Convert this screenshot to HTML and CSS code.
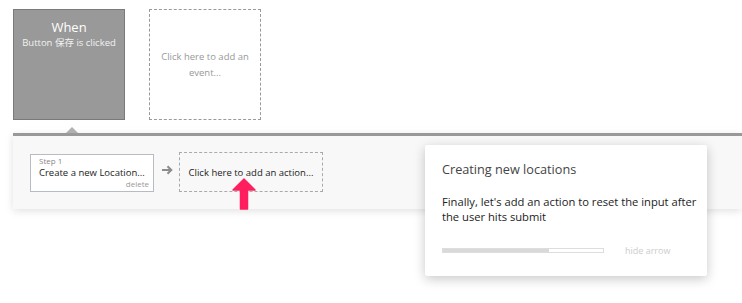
FILE: index.html
```html
<!DOCTYPE html>
<html lang="en">
<head>
  <meta charset="UTF-8" />
  <title>Workflow</title>
  <link rel="stylesheet" href="styles.css">
</head>
<body>

<div class="events">
  <div class="event-box when">
    <div class="when-title">When</div>
    <div class="when-sub">Button 保存 is clicked</div>
  </div>
  <div class="event-box add-event">Click here to add an event...</div>
</div>

<div class="panel">
  <div class="notch"></div>
  <div class="steps">
    <div class="step">
      <div class="step-label">Step 1</div>
      <div class="step-name">Create a new Location...</div>
      <div class="step-delete">delete</div>
    </div>
    <svg class="step-arrow" width="11" height="10" viewBox="0 0 11 10">
      <path d="M0 5 H9 M5.5 1.2 L9.3 5 L5.5 8.8" fill="none" stroke="#8c8c8c" stroke-width="2"/>
    </svg>
    <div class="add-action">Click here to add an action...</div>
  </div>
  <svg class="pink-arrow" width="24" height="32" viewBox="0 0 24 32">
    <path d="M12 1 L23 12 L15.5 12 L15.5 31 L8.5 31 L8.5 12 L1 12 Z" fill="#ff1f5e" stroke="#ff1f5e" stroke-width="1.5" stroke-linejoin="round"/>
  </svg>

  <div class="tip">
    <div class="tip-title">Creating new locations</div>
    <div class="tip-text">Finally, let's add an action to reset the input after the user hits submit</div>
    <div class="tip-foot">
      <div class="progress"><div class="progress-fill" style="width: 66%"></div></div>
      <div class="hide-arrow">hide arrow</div>
    </div>
  </div>
</div>

</body>
</html>
```

FILE: styles.css
```css
body {
  margin: 0;
  min-height: 303px;
  background: #fff;
  font-family: "Open Sans", "Noto Sans CJK SC", sans-serif;
}

.events {
  display: flex;
  gap: 24px;
  padding: 9px 0 0 13px;
}
.event-box {
  width: 112px;
  height: 111px;
  box-sizing: border-box;
}
.when {
  background-color: #999;
  background-image: radial-gradient(rgba(0, 0, 0, 0.06) 0.5px, transparent 0.6px);
  background-size: 2px 2px;
  border: 1px solid #7a7a7a;
  color: #fff;
  text-align: center;
  padding-top: 8px;
}
.when-title {
  font-size: 13px;
  line-height: 18px;
}
.when-sub {
  font-size: 9.5px;
  line-height: 14px;
  color: #f2f2f2;
}
.add-event {
  border: 1px dashed #999;
  color: #999;
  font-size: 9.5px;
  line-height: 16px;
  text-align: center;
  display: flex;
  align-items: center;
  justify-content: center;
  padding: 0 10px;
}

.panel {
  position: relative;
  margin: 13px 0 0 13px;
  height: 73px;
  border-top: 3px solid #999;
  background: #f8f8f8;
  box-shadow: 0 2px 8px rgba(0, 0, 0, 0.12);
}
.notch {
  position: absolute;
  left: 53px;
  top: -9px;
  width: 0;
  height: 0;
  border-left: 6px solid transparent;
  border-right: 6px solid transparent;
  border-bottom: 6px solid #b0b0b0;
}

.steps {
  display: flex;
  align-items: flex-end;
  padding: 16px 0 0 17px;
}
.step {
  width: 124px;
  height: 38px;
  box-sizing: border-box;
  border: 1px solid #b7bcc4;
  background: #fff;
  padding: 0 4px 0 8px;
  white-space: nowrap;
}
.step-label {
  font-size: 8px;
  line-height: 11px;
  color: #888;
}
.step-name {
  font-size: 9.5px;
  line-height: 13px;
  color: #222;
}
.step-delete {
  font-size: 8px;
  line-height: 10px;
  color: #999;
  text-align: right;
}
.step-arrow {
  margin: 0 6px 17px 8px;
}
.add-action {
  width: 144px;
  height: 40px;
  box-sizing: border-box;
  border: 1px dashed #aaa;
  font-size: 9.5px;
  color: #222;
  display: flex;
  align-items: center;
  justify-content: center;
}

.pink-arrow {
  position: absolute;
  left: 219px;
  top: 42px;
}

.tip {
  position: absolute;
  left: 412px;
  top: 9px;
  width: 282px;
  height: 131px;
  box-sizing: border-box;
  background: #fff;
  border-radius: 2px;
  box-shadow: 0 3px 12px rgba(0, 0, 0, 0.22);
  padding: 14px 8px 0 17px;
}
.tip-title {
  font-size: 12.7px;
  line-height: 20px;
  color: #444;
}
.tip-text {
  margin-top: 15px;
  font-size: 11.2px;
  line-height: 15px;
  color: #222;
}
.tip-foot {
  display: flex;
  align-items: center;
  margin-top: 20px;
}
.progress {
  width: 162px;
  height: 5px;
  flex-shrink: 0;
  box-sizing: border-box;
  border: 1px solid #ddd;
  background: #fff;
}
.progress-fill {
  height: 100%;
  background: #d9d9d9;
}
.hide-arrow {
  margin-left: 21px;
  font-size: 9px;
  color: #ccc;
}
```
